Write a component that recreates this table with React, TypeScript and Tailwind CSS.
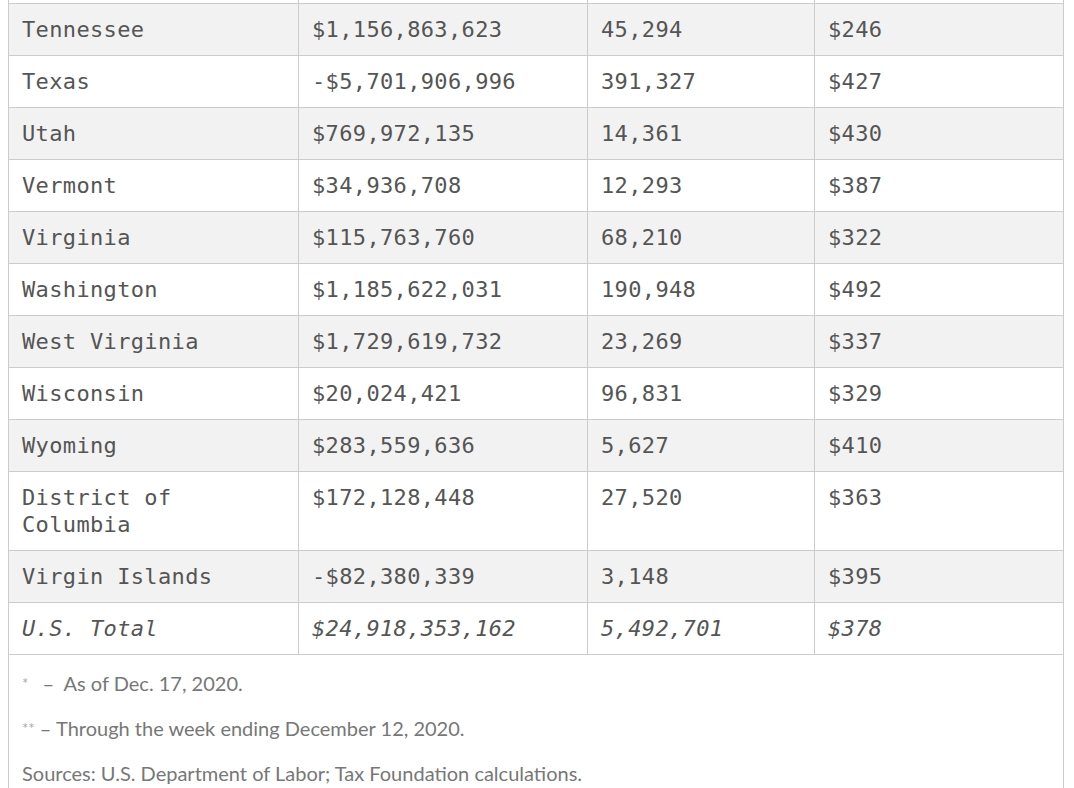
const rows: [string, string, string, string][] = [
  ["Tennessee", "$1,156,863,623", "45,294", "$246"],
  ["Texas", "-$5,701,906,996", "391,327", "$427"],
  ["Utah", "$769,972,135", "14,361", "$430"],
  ["Vermont", "$34,936,708", "12,293", "$387"],
  ["Virginia", "$115,763,760", "68,210", "$322"],
  ["Washington", "$1,185,622,031", "190,948", "$492"],
  ["West Virginia", "$1,729,619,732", "23,269", "$337"],
  ["Wisconsin", "$20,024,421", "96,831", "$329"],
  ["Wyoming", "$283,559,636", "5,627", "$410"],
  ["District of Columbia", "$172,128,448", "27,520", "$363"],
  ["Virgin Islands", "-$82,380,339", "3,148", "$395"],
]

const gridCols = "grid grid-cols-[290px_289px_227px_248px] border-b border-[#cccccc]"
const cell = "px-[13px] pt-[12px] pb-[12px] leading-[27px]"

export default function App() {
  return (
    <div className="min-h-screen bg-white">
      <div
        className="ml-[8px] w-[1056px] border-x border-[#cccccc] text-[22px] tracking-[0.35px] text-[#555555]"
        style={{ fontFamily: '"DejaVu Sans Mono", "Liberation Mono", monospace' }}
      >
        {/* sliver of the row above */}
        <div className={gridCols}>
          <div className="h-[3px] border-r border-[#cccccc]" />
          <div className="h-[3px] border-r border-[#cccccc]" />
          <div className="h-[3px] border-r border-[#cccccc]" />
          <div className="h-[3px]" />
        </div>

        {rows.map((r, i) => (
          <div key={r[0]} className={`${gridCols} ${i % 2 === 0 ? "bg-[#f2f2f2]" : "bg-white"}`}>
            <div className={`${cell} border-r border-[#cccccc] ${r[0] === "District of Columbia" ? "pr-[100px]" : ""}`}>
              {r[0]}
            </div>
            <div className={`${cell} border-r border-[#cccccc]`}>{r[1]}</div>
            <div className={`${cell} border-r border-[#cccccc]`}>{r[2]}</div>
            <div className={cell}>{r[3]}</div>
          </div>
        ))}

        <div className={`${gridCols} bg-white italic`}>
          <div className={`${cell} border-r border-[#cccccc]`}>U.S. Total</div>
          <div className={`${cell} border-r border-[#cccccc]`}>$24,918,353,162</div>
          <div className={`${cell} border-r border-[#cccccc]`}>5,492,701</div>
          <div className={cell}>$378</div>
        </div>

        <div
          className="px-[13px] pt-[15px] pb-[20px] text-[20px] leading-[27px] tracking-normal text-[#777777]"
          style={{ fontFamily: "Lato, 'Open Sans', sans-serif" }}
        >
          <p className="mb-[18px]">
            <span className="text-[15px] text-[#aaaaaa] align-top">*</span>
            <span className="ml-[14px]">–&nbsp; As of Dec. 17, 2020.</span>
          </p>
          <p className="mb-[18px]">
            <span className="text-[15px] text-[#aaaaaa] align-top">**</span>
            <span> – Through the week ending December 12, 2020.</span>
          </p>
          <p>Sources: U.S. Department of Labor; Tax Foundation calculations.</p>
        </div>
      </div>
    </div>
  )
}
